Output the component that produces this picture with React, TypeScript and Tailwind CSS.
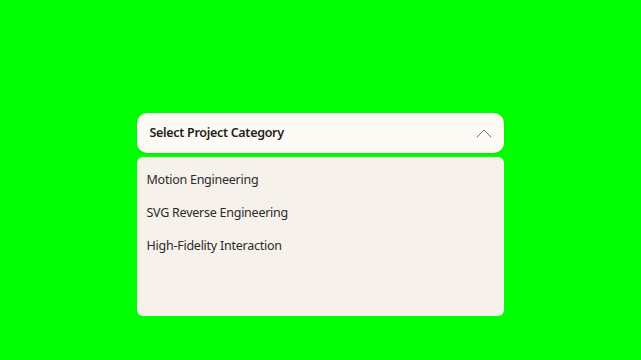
import { useState } from "react";

const categories = ["Motion Engineering", "SVG Reverse Engineering", "High-Fidelity Interaction"];

export default function App() {
  const [open, setOpen] = useState(true);

  return (
    <div
      className="w-full h-screen bg-[#00ff00] flex flex-col items-center pt-[113px]"
      style={{ fontFamily: '"Noto Sans", "Open Sans", sans-serif' }}
    >
      <div className="w-[367px] ml-[-1px] flex flex-col gap-[4px]">
        {/* Заголовок выпадающего списка */}
        <button
          onClick={() => setOpen(!open)}
          className="h-[40px] w-full rounded-[10px] bg-[#fdf9f5] shadow-[0_1px_2px_rgba(0,0,0,0.12)] flex items-center justify-between pl-[13px] pr-[11px]"
        >
          <span className="text-[12.5px] font-semibold text-[#1f1f1f] tracking-[-0.3px]">Select Project Category</span>
          <svg width="18" height="12" viewBox="0 0 18 12" fill="none" stroke="#6b6b6b" strokeWidth="1" strokeLinecap="round">
            <polyline points="2,10 9,3 16,10" />
          </svg>
        </button>

        {open && (
          <div className="h-[159px] rounded-[6px] bg-[#f6f1ea] pt-[7px] px-[10px]">
            {categories.map((c) => (
              <div key={c} className="h-[33px] flex items-center text-[12.5px] text-[#2b2b2b] tracking-[-0.25px]">
                {c}
              </div>
            ))}
          </div>
        )}
      </div>
    </div>
  );
}
